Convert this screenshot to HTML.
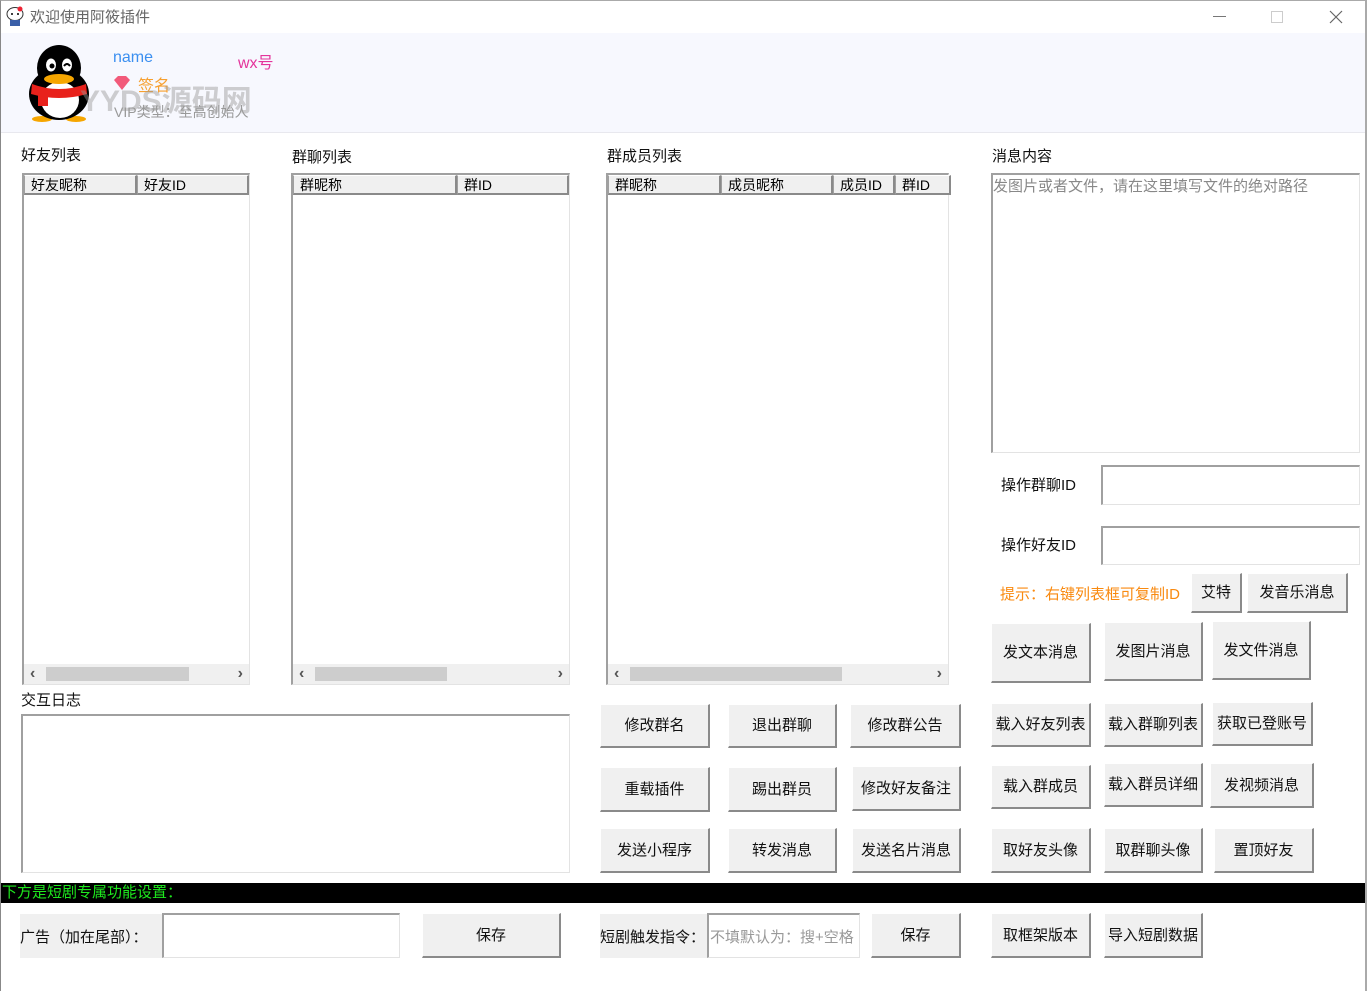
<!DOCTYPE html>
<html><head><meta charset="utf-8">
<style>
*{box-sizing:border-box;margin:0;padding:0}
body{width:1367px;height:991px;background:#fff;font-family:"Liberation Sans","Noto Sans CJK SC","WenQuanYi Zen Hei",sans-serif;font-size:15px;color:#000;position:relative;overflow:hidden}
.a{position:absolute}
.lbl{position:absolute;font-size:15px;color:#111;white-space:nowrap}
.btn{position:absolute;background:#f0f0f0;border-top:1px solid #fff;border-left:1px solid #fff;border-right:2px solid #8a8a8a;border-bottom:2px solid #8a8a8a;font-size:15px;color:#111;display:flex;align-items:center;justify-content:center;white-space:nowrap;padding-bottom:2px}
.box{position:absolute;border-top:2px solid #a0a0a0;border-left:2px solid #a0a0a0;border-right:1px solid #e3e3e3;border-bottom:1px solid #e3e3e3;background:#fff}
.hdr{position:absolute;top:0;height:20px;background:#f0f0f0;border:1px solid #a0a0a0;border-top:1px solid #fff;font-size:14px;padding-left:6px;line-height:18px;border-right:2px solid #8a8a8a;border-bottom:2px solid #8a8a8a}
.sb{position:absolute;left:0;right:0;bottom:0;height:20px;background:#f0f0f0}
.th{position:absolute;top:3px;height:14px;background:#cdcdcd}
.ar{position:absolute;top:0;font-size:16px;font-weight:bold;color:#555;line-height:20px}
</style></head><body>
<div class="a" style="left:0;top:0;width:1367px;height:991px;border-left:1px solid #888;border-right:2px solid #aaa;border-top:1px solid #aaa"></div>
<svg class="a" style="left:6px;top:6px" width="18" height="20" viewBox="0 0 18 20"><ellipse cx="9" cy="8" rx="8" ry="6.5" fill="#fff" stroke="#333"/><circle cx="6" cy="8" r="1" fill="#000"/><circle cx="12" cy="8" r="1" fill="#000"/><circle cx="14" cy="3" r="2.5" fill="#e23"/><rect x="4" y="14" width="10" height="6" fill="#3a5fa8"/></svg>
<div class="lbl" style="left:30px;top:6px;color:#666;font-size:15px">欢迎使用阿筱插件</div>
<div class="a" style="left:1213px;top:16px;width:13px;height:1px;background:#777"></div>
<div class="a" style="left:1271px;top:11px;width:12px;height:12px;border:1px solid #ccc"></div>
<svg class="a" style="left:1329px;top:10px" width="14" height="14"><path d="M1 1L13 13M13 1L1 13" stroke="#666" stroke-width="1.2"/></svg>
<div class="a" style="left:1px;top:33px;width:1364px;height:100px;background:#f7f8fe;border-bottom:1px solid #e8e8ee"></div>
<svg class="a" style="left:24px;top:44px" width="70" height="78" viewBox="0 0 70 78">
<ellipse cx="18" cy="75" rx="10" ry="3" fill="#f6a600"/><ellipse cx="52" cy="75" rx="10" ry="3" fill="#f6a600"/>
<ellipse cx="35" cy="50" rx="30" ry="26" fill="#000"/>
<ellipse cx="35" cy="24" rx="22" ry="23" fill="#000"/>
<ellipse cx="36" cy="56" rx="19" ry="18" fill="#fff"/>
<path d="M8 40Q35 50 62 40L63 50Q35 58 7 50Z" fill="#e8211b"/><rect x="14" y="46" width="10" height="16" fill="#e8211b"/>
<ellipse cx="35" cy="35" rx="15" ry="5" fill="#f6a600"/>
<ellipse cx="27" cy="21" rx="5" ry="6.5" fill="#fff"/><ellipse cx="43" cy="21" rx="5" ry="6.5" fill="#fff"/>
<circle cx="28" cy="22" r="2.5" fill="#000"/><path d="M40 22Q43 18 46 22" stroke="#000" stroke-width="2" fill="none"/>
</svg>
<div class="lbl" style="left:113px;top:49px;color:#3b8ff0;font-size:16px">name</div>
<div class="lbl" style="left:238px;top:49px;color:#e4349b;font-size:16px">wx号</div>
<svg class="a" style="left:112px;top:75px" width="20" height="16"><path d="M2 5L6 1H14L18 5L10 15Z" fill="#f25a7a"/></svg>
<div class="lbl" style="left:138px;top:72px;color:#f7a030;font-size:16px">签名</div>
<div class="lbl" style="left:80px;top:76px;color:rgba(150,150,150,.45);font-size:30px;font-weight:bold">YYDS源码网</div>
<div class="lbl" style="left:114px;top:102px;color:#999;font-size:14px">VIP类型：至高创始人</div>
<div class="lbl" style="left:21px;top:144px">好友列表</div>
<div class="lbl" style="left:292px;top:146px">群聊列表</div>
<div class="lbl" style="left:607px;top:145px">群成员列表</div>
<div class="lbl" style="left:992px;top:145px">消息内容</div>
<div class="lbl" style="left:21px;top:689px">交互日志</div>
<div class="box" style="left:22px;top:173px;width:228px;height:512px">
<div class="hdr" style="left:0;width:113px">好友昵称</div><div class="hdr" style="left:113px;width:112px">好友ID</div>
<div class="sb"><span class="ar" style="left:6px">‹</span><div class="th" style="left:22px;width:143px"></div><span class="ar" style="right:6px">›</span></div></div>
<div class="box" style="left:291px;top:173px;width:279px;height:512px">
<div class="hdr" style="left:0;width:164px">群昵称</div><div class="hdr" style="left:164px;width:112px">群ID</div>
<div class="sb"><span class="ar" style="left:6px">‹</span><div class="th" style="left:22px;width:132px"></div><span class="ar" style="right:6px">›</span></div></div>
<div class="box" style="left:606px;top:173px;width:343px;height:512px">
<div class="hdr" style="left:0;width:113px">群昵称</div><div class="hdr" style="left:113px;width:112px">成员昵称</div><div class="hdr" style="left:225px;width:62px">成员ID</div><div class="hdr" style="left:287px;width:56px">群ID</div>
<div class="sb"><span class="ar" style="left:6px">‹</span><div class="th" style="left:22px;width:212px"></div><span class="ar" style="right:6px">›</span></div></div>
<div class="box" style="left:21px;top:714px;width:549px;height:159px"></div>
<div class="box" style="left:991px;top:173px;width:369px;height:280px"><div class="lbl" style="left:0;top:0;color:#888;font-size:15px">发图片或者文件，请在这里填写文件的绝对路径</div></div>
<div class="lbl" style="left:1001px;top:474px">操作群聊ID</div>
<div class="lbl" style="left:1001px;top:534px">操作好友ID</div>
<div class="box" style="left:1101px;top:465px;width:259px;height:40px"></div>
<div class="box" style="left:1101px;top:526px;width:259px;height:39px"></div>
<div class="lbl" style="left:1000px;top:583px;color:#f98a10">提示：右键列表框可复制ID</div>
<div class="btn" style="left:1191px;top:573px;width:51px;height:40px">艾特</div>
<div class="btn" style="left:1247px;top:573px;width:101px;height:40px">发音乐消息</div>
<div class="btn" style="left:991px;top:623px;width:100px;height:60px">发文本消息</div>
<div class="btn" style="left:1104px;top:622px;width:99px;height:59px">发图片消息</div>
<div class="btn" style="left:1212px;top:621px;width:99px;height:59px">发文件消息</div>
<div class="btn" style="left:600px;top:704px;width:110px;height:44px">修改群名</div>
<div class="btn" style="left:728px;top:704px;width:109px;height:44px">退出群聊</div>
<div class="btn" style="left:850px;top:704px;width:111px;height:44px">修改群公告</div>
<div class="btn" style="left:991px;top:703px;width:100px;height:44px">载入好友列表</div>
<div class="btn" style="left:1104px;top:703px;width:99px;height:44px">载入群聊列表</div>
<div class="btn" style="left:1212px;top:702px;width:101px;height:44px">获取已登账号</div>
<div class="btn" style="left:600px;top:767px;width:110px;height:45px">重载插件</div>
<div class="btn" style="left:728px;top:767px;width:109px;height:45px">踢出群员</div>
<div class="btn" style="left:852px;top:766px;width:109px;height:45px">修改好友备注</div>
<div class="btn" style="left:991px;top:765px;width:100px;height:44px">载入群成员</div>
<div class="btn" style="left:1104px;top:763px;width:99px;height:44px">载入群员详细</div>
<div class="btn" style="left:1210px;top:763px;width:104px;height:45px">发视频消息</div>
<div class="btn" style="left:600px;top:828px;width:110px;height:45px">发送小程序</div>
<div class="btn" style="left:728px;top:828px;width:109px;height:45px">转发消息</div>
<div class="btn" style="left:852px;top:828px;width:109px;height:45px">发送名片消息</div>
<div class="btn" style="left:991px;top:828px;width:100px;height:45px">取好友头像</div>
<div class="btn" style="left:1104px;top:828px;width:99px;height:45px">取群聊头像</div>
<div class="btn" style="left:1214px;top:828px;width:100px;height:45px">置顶好友</div>
<div class="a" style="left:1px;top:883px;width:1364px;height:20px;background:#000"></div>
<div class="lbl" style="left:2px;top:884px;color:#1ee81e;font-size:15px;line-height:18px">下方是短剧专属功能设置：</div>
<div class="a" style="left:20px;top:914px;width:142px;height:44px;background:#f0f0f0"></div>
<div class="lbl" style="left:20px;top:926px">广告（加在尾部）：</div>
<div class="box" style="left:162px;top:913px;width:238px;height:45px"></div>
<div class="btn" style="left:422px;top:913px;width:139px;height:45px">保存</div>
<div class="a" style="left:600px;top:914px;width:108px;height:44px;background:#f0f0f0"></div>
<div class="lbl" style="left:600px;top:926px">短剧触发指令：</div>
<div class="box" style="left:707px;top:913px;width:153px;height:45px"><div class="lbl" style="left:1px;top:11px;color:#999">不填默认为：搜+空格</div></div>
<div class="btn" style="left:871px;top:913px;width:90px;height:45px">保存</div>
<div class="btn" style="left:991px;top:913px;width:100px;height:45px">取框架版本</div>
<div class="btn" style="left:1104px;top:913px;width:99px;height:45px">导入短剧数据</div>
</body></html>
